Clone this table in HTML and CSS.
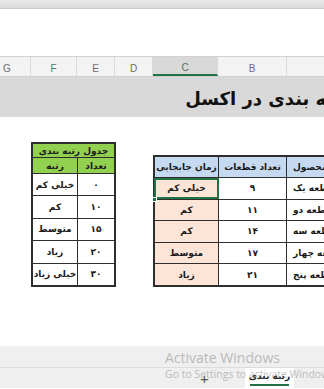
FILE: index.html
```html
<!DOCTYPE html>
<html lang="fa">
<head>
<meta charset="utf-8">
<link rel="stylesheet" href="styles.css">
</head>
<body>
<div class="screen">
  <div class="topbar"></div>
  <div class="formula"></div>
  <div class="colheads">
    <div class="ch w-g">G</div>
    <div class="ch w-f">F</div>
    <div class="ch w-e">E</div>
    <div class="ch w-d">D</div>
    <div class="ch w-c sel">C</div>
    <div class="ch w-b">B</div>
    <div class="ch w-a">A</div>
  </div>
  <div class="titleband"><span class="title">رتبه بندی در اکسل</span></div>
  <div class="sheet">
    <table class="rank">
      <tr class="r-title"><td colspan="2" class="green">جدول رتبه بندی</td></tr>
      <tr class="r-sub"><td class="green cf">رتبه</td><td class="green ce">تعداد</td></tr>
      <tr><td>خیلی کم</td><td>۰</td></tr>
      <tr><td>کم</td><td>۱۰</td></tr>
      <tr><td>متوسط</td><td>۱۵</td></tr>
      <tr><td>زیاد</td><td>۲۰</td></tr>
      <tr><td>خیلی زیاد</td><td>۳۰</td></tr>
    </table>
    <table class="data">
      <tr class="r-head"><td class="blue cc">زمان جابجایی</td><td class="blue cb">تعداد قطعات</td><td class="blue ca"><span class="aval">نام محصول</span></td></tr>
      <tr><td class="peach active">خیلی کم<span class="handle"></span></td><td>۹</td><td class="ca"><span class="aval">قطعه یک</span></td></tr>
      <tr><td class="peach">کم</td><td>۱۱</td><td class="ca"><span class="aval">قطعه دو</span></td></tr>
      <tr><td class="peach">کم</td><td>۱۴</td><td class="ca"><span class="aval">قطعه سه</span></td></tr>
      <tr><td class="peach">متوسط</td><td>۱۷</td><td class="ca"><span class="aval">قطعه چهار</span></td></tr>
      <tr><td class="peach">زیاد</td><td>۲۱</td><td class="ca"><span class="aval">قطعه پنج</span></td></tr>
    </table>
  </div>
  <div class="tabbar">
    <div class="tabline"></div>
    <div class="tabrow">
      <span class="plus">+</span>
      <span class="tab">رتبه بندی</span>
    </div>
    <div class="watermark">
      <div class="wm1">Activate Windows</div>
      <div class="wm2">Go to Settings to activate Windows.</div>
    </div>
  </div>
</div>
</body>
</html>
```

FILE: styles.css
```css
html, body {
  margin: 0;
  padding: 0;
  overflow: hidden;
  background: #ffffff;
}
.screen {
  width: 324px;
  height: 389px;
  overflow: hidden;
  position: relative;
  font-family: "DejaVu Sans", "Liberation Sans", sans-serif;
}
.topbar {
  height: 8px;
  background: linear-gradient(#e9e9e9, #dcdcdc);
  border-bottom: 1px solid #c9c9c9;
}
.formula {
  height: 47px;
  background: #ffffff;
  border-bottom: 1px solid #d2d2d2;
}
.colheads {
  display: flex;
  height: 19px;
  background: #f3f3f3;
  border-bottom: 1px solid #d0d0d0;
  font-family: "Liberation Sans", sans-serif;
  font-size: 10px;
  color: #6d6d6d;
}
.ch {
  flex: none;
  box-sizing: border-box;
  border-right: 1px solid #dadada;
  display: flex;
  align-items: center;
  justify-content: center;
  padding-top: 4px;
}
.w-g { width: 31px; padding-right: 16px; }
.w-f { width: 46px; }
.w-e { width: 38px; }
.w-d { width: 38px; }
.w-c { width: 65px; }
.w-b { width: 69px; }
.w-a { width: 70px; border-right: none; padding-left: 66px; }
.ch.sel {
  background: #d9d9d9;
  border-bottom: 2px solid #217346;
  color: #4d6f5c;
}
.titleband {
  height: 40px;
  background: #d9d9d9;
  display: flex;
  justify-content: flex-end;
  align-items: center;
  overflow: hidden;
}
.title {
  flex: none;
  direction: rtl;
  font-family: "DejaVu Sans", sans-serif;
  font-weight: bold;
  font-size: 18px;
  color: #111;
  margin-right: -27px;
  padding-top: 3px;
  white-space: nowrap;
}
.sheet {
  height: 229px;
  display: flex;
  align-items: flex-start;
  padding-left: 31px;
  gap: 37px;
  overflow: hidden;
}
table {
  border-collapse: collapse;
  flex: none;
  font-family: "DejaVu Sans", sans-serif;
  font-weight: bold;
  font-size: 9px;
  color: #1a1a1a;
}
td {
  border: 1px solid #2e2e2e;
  text-align: center;
  padding: 0;
  white-space: nowrap;
  direction: rtl;
}
.rank {
  margin-top: 25px;
  border: 2px solid #2e2e2e;
}
.rank td { height: 21.4px; }
.rank .r-title td { height: 13px; }
.rank .r-sub td { height: 15px; }
.cf { width: 44px; }
.ce { width: 36px; }
.green { background: #92d050; }
.data {
  margin-top: 38px;
  border: 2px solid #2e2e2e;
  border-right: none;
}
.data td { height: 20.6px; }
.data .r-head td { height: 20px; }
.cc { width: 63px; }
.cb { width: 67px; }
.ca {
  width: 70px;
  border-right: none;
  text-align: left;
  overflow: hidden;
}
.aval { display: inline-block; padding-left: 6px; }
.blue { background: #c5d9f1; }
.peach { background: #fce4d6; }
.active {
  position: relative;
  outline: 2px solid #217346;
  outline-offset: -2px;
}
.handle {
  position: absolute;
  left: -3px;
  bottom: -3px;
  width: 5px;
  height: 5px;
  background: #217346;
  border: 1px solid #fff;
  box-sizing: border-box;
}
.tabbar {
  position: relative;
  height: 42px;
  background: #efefef;
}
.tabline {
  height: 21px;
  border-bottom: 1px solid #dcdcdc;
}
.tabrow {
  display: flex;
  align-items: flex-end;
  height: 20px;
  padding-left: 200px;
}
.plus {
  width: 12px;
  font-family: "Liberation Sans", sans-serif;
  font-size: 15px;
  line-height: 18px;
  color: #555;
  margin-right: 33px;
}
.tab {
  width: 49px;
  height: 20px;
  box-sizing: border-box;
  background: #ffffff;
  text-align: center;
  font-family: "DejaVu Sans", sans-serif;
  font-weight: bold;
  font-size: 9px;
  line-height: 16px;
  color: #222;
  position: relative;
}
.tab::after {
  content: "";
  position: absolute;
  left: 5px;
  right: 5px;
  bottom: 2px;
  height: 2px;
  background: #217346;
}
.watermark {
  position: absolute;
  left: 165px;
  top: 3px;
  font-family: "Open Sans", "Liberation Sans", sans-serif;
  color: rgba(130, 130, 130, 0.5);
  white-space: nowrap;
  pointer-events: none;
}
.wm1 { font-size: 14px; line-height: 18px; }
.wm2 { font-size: 10.5px; line-height: 14px; }
```
